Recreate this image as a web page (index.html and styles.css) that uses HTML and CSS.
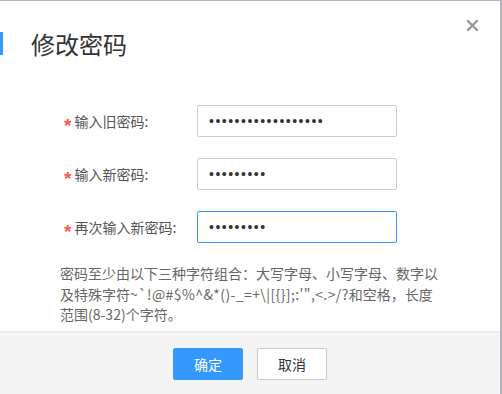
FILE: index.html
```html
<!DOCTYPE html>
<html lang="zh-CN">
<head>
    <meta charset="UTF-8">
    <meta name="viewport" content="width=device-width, initial-scale=1.0">
    <title>修改密码</title>
    <link rel="stylesheet" href="styles.css">
</head>
<body>
    <div class="dialog">
        <div class="dialog-header">
            <h2 class="dialog-title">修改密码</h2>
            <a class="dialog-close" href="#" title="关闭">
                <svg width="11" height="11" viewBox="0 0 11 11">
                    <path d="M1 1 L10 10 M10 1 L1 10" stroke="#999" stroke-width="2.4" stroke-linecap="square" fill="none"/>
                </svg>
            </a>
        </div>
        <form class="dialog-body">
            <div class="form-row">
                <label for="oldPwd"><span class="required">*</span>输入旧密码:</label>
                <input type="password" id="oldPwd" class="pwd-input" value="abcdefghijklmnopqr">
            </div>
            <div class="form-row">
                <label for="newPwd"><span class="required">*</span>输入新密码:</label>
                <input type="password" id="newPwd" class="pwd-input" value="abcdefghi">
            </div>
            <div class="form-row">
                <label for="rePwd"><span class="required">*</span>再次输入新密码:</label>
                <input type="password" id="rePwd" class="pwd-input active" value="abcdefghi">
            </div>
            <p class="hint">密码至少由以下三种字符组合：大写字母、小写字母、数字以<br>及特殊字符<span class="symbols">~`!@#$%^&amp;*()-_=+\|[{}];:'",&lt;.&gt;/?</span>和空格，长度<br>范围(8-32)个字符。</p>
        </form>
        <div class="dialog-footer">
            <button type="button" class="btn btn-primary">确定</button>
            <button type="button" class="btn">取消</button>
        </div>
    </div>
</body>
</html>
```

FILE: styles.css
```css
body {
    margin: 0;
    background: #b4b5b8; /* фон сторінки за діалогом */
    font-family: "Noto Sans CJK SC", "Noto Sans", sans-serif;
    font-size: 14px;
    color: #333;
    height: 394px;
    overflow: hidden;
}

.dialog {
    width: 500px;
    height: 393px;
    margin-top: 1px;
    background: white;
    display: flex;
    flex-direction: column;
    position: relative;
}

.dialog-header {
    height: 84px;
    display: flex;
    align-items: center;
}

.dialog-title {
    margin: 0;
    border-left: 3px solid #3399ff;
    padding-left: 28px;
    height: 23px;
    line-height: 23px;
    font-size: 24px;
    font-weight: normal;
    color: #333;
}

.dialog-close {
    position: absolute;
    top: 19px;
    right: 22px;
    width: 11px;
    height: 11px;
    display: block;
}

.dialog-close svg {
    display: block;
}

.dialog-body {
    padding: 20px 0 0 0;
    margin: 0;
    flex: 1;
    display: flex;
    flex-direction: column;
    gap: 21px;
}

.form-row {
    display: flex;
    align-items: center;
    height: 32px;
    padding-left: 64px;
}

.form-row label {
    width: 133px;
    color: #555;
    font-size: 14px;
}

.required {
    color: #f55;
    margin-right: 3px;
    font-family: "Liberation Sans", sans-serif;
    font-size: 19px;
    font-weight: bold;
    position: relative;
    top: 5px;
    line-height: 0;
}

.pwd-input {
    width: 200px;
    height: 32px;
    box-sizing: border-box;
    border: 1px solid #ccc;
    border-radius: 2px;
    padding: 0 11px;
    font-family: "Liberation Sans", sans-serif;
    font-size: 14px;
    letter-spacing: 1.5px;
    color: #333;
    outline: none;
}

.pwd-input.active {
    border-color: #3399ff;
}

.hint {
    margin: -1px 0 0 0;
    padding-left: 60px;
    line-height: 20.5px;
    color: #666;
    font-size: 14px;
}

.symbols {
    letter-spacing: 0.4px;
}

.dialog-footer {
    height: 63px;
    box-sizing: border-box;
    border-top: 1px solid #e6e6e6;
    background: #f4f4f4;
    display: flex;
    justify-content: center;
    align-items: flex-start;
    gap: 14px;
    padding-top: 16px;
}

.btn {
    width: 70px;
    height: 32px;
    border: 1px solid #ccc;
    border-radius: 2px;
    background: white;
    color: #333;
    font-family: "Noto Sans CJK SC", sans-serif;
    font-size: 14px;
    cursor: pointer;
}

.btn-primary {
    background: #3399ff;
    border-color: #3399ff;
    color: white;
}
```
